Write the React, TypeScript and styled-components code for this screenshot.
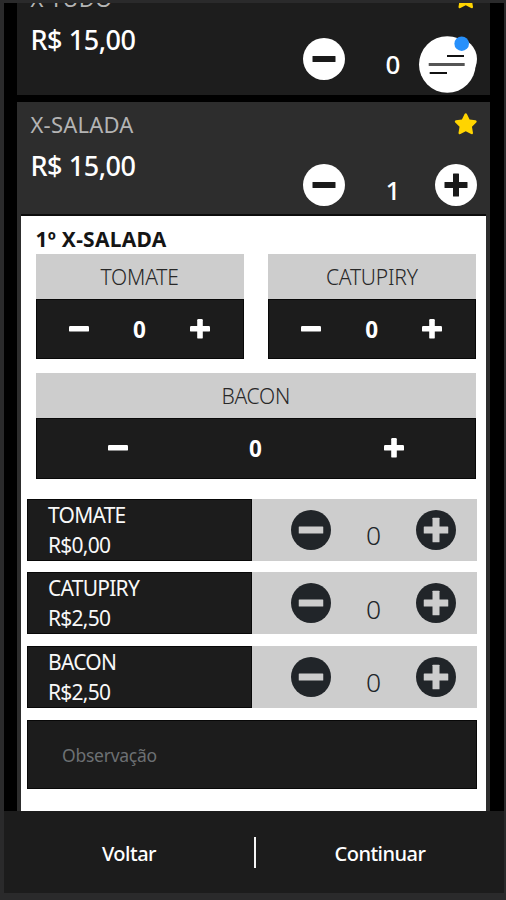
import React from "react";
import styled, { createGlobalStyle } from "styled-components";
import { FaStar } from "react-icons/fa";

const GlobalStyle = createGlobalStyle`
  * { box-sizing: border-box; }
  body { margin: 0; background: #2a2a2b; font-family: "Noto Sans", "Open Sans", sans-serif; }
  button { padding: 0; border: 0; background: none; display: block; line-height: 0; }
`;

const Frame = styled.div`
  width: 506px;
  height: 900px;
  padding: 3px 2px 7px 4px;
  background: #2a2a2b;
  overflow: hidden;
`;

const Screen = styled.div`
  position: relative;
  height: 890px;
  background: #000;
  display: flex;
  flex-direction: column;
`;

const Products = styled.main`
  height: 807.5px;
  padding: 0 14px 0 13px;
  overflow: hidden;
  display: flex;
  flex-direction: column;
  gap: 7px;
`;

const Product = styled.section<{ $selected?: boolean }>`
  flex: none;
  background: ${(p) => (p.$selected ? "#2d2d2d" : "#1d1d1d")};
  margin-top: ${(p) => (p.$selected ? "0" : "-27px")};
  height: ${(p) => (p.$selected ? "709px" : "119px")};
`;

const ProductHead = styled.header`
  height: 111.5px;
  padding: 7px 13px 0 13.5px;
  display: flex;
  justify-content: space-between;
`;

const ProductName = styled.div`
  font-size: 22px;
  line-height: 30px;
  letter-spacing: 0.2px;
  color: #b4b4b4;
`;

const Price = styled.div`
  margin-top: 12px;
  font-size: 27px;
  line-height: 30px;
  font-weight: 500;
  letter-spacing: -0.45px;
  color: #fff;
  white-space: nowrap;
`;

const Actions = styled.div`
  display: flex;
  flex-direction: column;
  align-items: flex-end;
  width: 174px;
  padding-top: 3px;
`;

const Star = styled(FaStar)`
  flex: none;
  width: 23.5px;
  height: 23.5px;
  color: #ffd400;
`;

const Counter = styled.div`
  margin-top: 28px;
  width: 100%;
  display: flex;
  align-items: center;
  justify-content: space-between;
`;

const Quantity = styled.span`
  padding: 11px 0 0 6px;
  font-size: 26px;
  line-height: 30px;
  font-weight: 500;
  color: #fff;
`;

const Panel = styled.div`
  margin: 0 4px 0 4px;
  height: 597px;
  border-top: 2px solid #0c0c0c;
  background: #fff;
`;

const Heading = styled.h2`
  margin: 0;
  height: 38px;
  padding: 9.5px 0 0 14.5px;
  font-size: 21px;
  line-height: 29.5px;
  font-weight: 700;
  letter-spacing: 0.25px;
  color: #151515;
`;

const Options = styled.div`
  padding: 0 10px 0 14.5px;
  display: grid;
  grid-template-columns: 1fr 1fr;
  gap: 14px 24px;
`;

const Option = styled.div<{ $wide?: boolean }>`
  grid-column: ${(p) => (p.$wide ? "1 / -1" : "auto")};
`;

const OptionName = styled.div`
  height: 45px;
  background: #cdcdcd;
  text-align: center;
  font-size: 21px;
  line-height: 46px;
  font-weight: 300;
  letter-spacing: -0.2px;
  color: #282828;
`;

const OptionBar = styled.div<{ $wide?: boolean }>`
  height: 60.5px;
  padding: 0 ${(p) => (p.$wide ? "71.5px" : "33px")} 0 ${(p) => (p.$wide ? "71px" : "32.5px")};
  display: flex;
  align-items: center;
  justify-content: space-between;
  background: #1c1c1c;
  border: 1px solid #080808;
`;

const OptionCount = styled.span`
  padding-top: 2px;
  font-size: 22.5px;
  line-height: 30px;
  font-weight: 700;
  color: #fff;
`;

const Extras = styled.div`
  padding: 20px 9px 0 6px;
  display: grid;
  gap: 11.5px;
`;

const Extra = styled.div`
  height: 62.2px;
  display: flex;
  background: #cdcdcd;
`;

const ExtraInfo = styled.div`
  width: 225px;
  padding: 0 0 0 20px;
  border: 1px solid #080808;
  background: #1c1c1c;
  color: #f8f8f8;
  font-size: 21px;
  line-height: 30px;
  letter-spacing: -0.75px;
`;

const ExtraCounter = styled.div`
  flex: 1;
  padding: 0 20.5px 0 38.5px;
  display: flex;
  align-items: center;
  justify-content: space-between;
`;

const ExtraCount = styled.span`
  padding-top: 11px;
  font-size: 26.5px;
  line-height: 30px;
  font-weight: 300;
  color: #212529;
`;

const Note = styled.textarea`
  display: block;
  width: 450px;
  height: 69px;
  margin: 11.5px 0 0 6px;
  padding: 19px 34px;
  resize: none;
  overflow: hidden;
  border: 1px solid #080808;
  border-radius: 0;
  background: #1c1c1c;
  font: 400 17.5px/30px "Noto Sans", sans-serif;
  letter-spacing: -0.25px;
  &::placeholder { color: #6c7073; opacity: 1; }
`;

const Footer = styled.footer`
  flex: 1;
  display: grid;
  grid-template-columns: 250px 2px 1fr;
  align-items: center;
  background: #1c1c1c;
`;

const FooterButton = styled.button`
  font: 500 20px/30px "Noto Sans", sans-serif;
  letter-spacing: -0.5px;
  color: #fff;
  text-align: center;
  padding-top: 5px;
`;

const Divider = styled.span`
  width: 1.5px;
  height: 31px;
  margin-top: 2px;
  background: #f5f5f5;
`;

const ChatBubble = styled.button`
  position: absolute;
  left: 414px;
  top: 33px;
`;

const Svg = styled.svg`
  display: block;
  flex: none;
`;

function CircleIcon({ plus, size, fill, bar }: { plus?: boolean; size: number; fill: string; bar: string }) {
  const length = size > 41 ? 23 : 24.5;
  const thick = size > 41 ? 6 : 7;
  const c = size / 2;
  return (
    <Svg width={size} height={size} viewBox={`0 0 ${size} ${size}`}>
      <circle cx={c} cy={c} r={c} fill={fill} />
      <rect x={c - length / 2} y={c - thick / 2} width={length} height={thick} rx="0.6" fill={bar} />
      {plus && <rect x={c - thick / 2} y={c - length / 2} width={thick} height={length} rx="0.6" fill={bar} />}
    </Svg>
  );
}

function SignIcon({ plus }: { plus?: boolean }) {
  return (
    <Svg width="20" height="20" viewBox="0 0 20 20" fill="#fff">
      <rect x="0" y="7" width="20" height="5.6" rx="1.2" />
      {plus && <rect x="7.2" y="0" width="5.6" height="19.6" rx="1.2" />}
    </Svg>
  );
}

function ProductCard({ name, count, children }: { name: string; count: number; children?: React.ReactNode }) {
  return (
    <Product $selected={count > 0}>
      <ProductHead>
        <div>
          <ProductName>{name}</ProductName>
          <Price>R$ 15,00</Price>
        </div>
        <Actions>
          <Star />
          <Counter>
            <button aria-label="minus"><CircleIcon size={42} fill="#fff" bar="#1a1a1a" /></button>
            <Quantity>{count}</Quantity>
            <button aria-label="plus"><CircleIcon plus size={42} fill="#fff" bar="#1a1a1a" /></button>
          </Counter>
        </Actions>
      </ProductHead>
      {children}
    </Product>
  );
}

function OptionBox({ name, wide }: { name: string; wide?: boolean }) {
  return (
    <Option $wide={wide}>
      <OptionName>{name}</OptionName>
      <OptionBar $wide={wide}>
        <button aria-label="minus"><SignIcon /></button>
        <OptionCount>0</OptionCount>
        <button aria-label="plus"><SignIcon plus /></button>
      </OptionBar>
    </Option>
  );
}

const extras = [
  { name: "TOMATE", price: "R$0,00" },
  { name: "CATUPIRY", price: "R$2,50" },
  { name: "BACON", price: "R$2,50" },
];

export default function App() {
  return (
    <Frame>
      <GlobalStyle />
      <Screen>
        <Products>
          <ProductCard name="X-TUDO" count={0} />
          <ProductCard name="X-SALADA" count={1}>
            <Panel>
              <Heading>1º X-SALADA</Heading>
              <Options>
                <OptionBox name="TOMATE" />
                <OptionBox name="CATUPIRY" />
                <OptionBox name="BACON" wide />
              </Options>
              <Extras>
                {extras.map((extra) => (
                  <Extra key={extra.name}>
                    <ExtraInfo>
                      <div>{extra.name}</div>
                      <div>{extra.price}</div>
                    </ExtraInfo>
                    <ExtraCounter>
                      <button aria-label="minus"><CircleIcon size={40} fill="#212529" bar="#cdcdcd" /></button>
                      <ExtraCount>0</ExtraCount>
                      <button aria-label="plus"><CircleIcon plus size={40} fill="#212529" bar="#cdcdcd" /></button>
                    </ExtraCounter>
                  </Extra>
                ))}
              </Extras>
              <Note placeholder="Observação" />
            </Panel>
          </ProductCard>
        </Products>
        <Footer>
          <FooterButton>Voltar</FooterButton>
          <Divider />
          <FooterButton>Continuar</FooterButton>
        </Footer>
        <ChatBubble aria-label="chat">
          <Svg width="60" height="60" viewBox="0 0 60 60">
            <circle cx="29.3" cy="28.5" r="28.3" fill="#fff" />
            <rect x="29" y="19" width="17" height="2" fill="#111" />
            <rect x="10.7" y="26.9" width="36" height="3" rx="0.5" fill="#555" />
            <rect x="11.7" y="36" width="17.3" height="2" fill="#111" />
            <circle cx="43.7" cy="7.7" r="7.3" fill="#2790fb" />
          </Svg>
        </ChatBubble>
      </Screen>
    </Frame>
  );
}
